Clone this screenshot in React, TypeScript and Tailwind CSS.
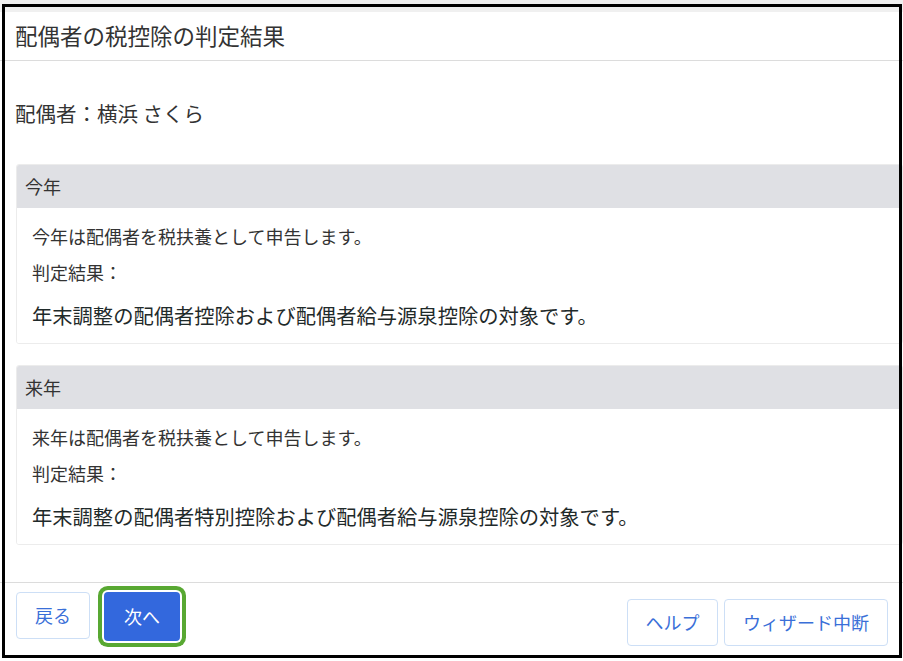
import React from "react";

const font = { fontFamily: '"Noto Sans CJK JP", "Noto Sans", sans-serif' };

function Card({ title, lead, result }: { title: string; lead: string; result: string }) {
  return (
    <div className="ml-[16px] border border-[#ececec] rounded-[3px] overflow-hidden">
      <div className="h-[43px] bg-[#dfe0e4] flex items-center pl-[8px] text-[18px] text-[#333]">{title}</div>
      <div className="bg-white pl-[15px] pt-[15px] pb-[13px] text-[#333]">
        <div className="text-[18px] leading-[26px]">{lead}</div>
        <div className="text-[18px] leading-[26px] mt-[10px]">判定結果：</div>
        <div className="text-[20.3px] leading-[30px] mt-[15px] text-[#1f2a2a]">{result}</div>
      </div>
    </div>
  );
}

export default function App() {
  return (
    <div className="relative w-[903px] h-[661px] bg-white overflow-hidden" style={font}>
      <div className="h-[12px] bg-[#f0f0f0]" />
      <div className="h-[49px] border-b border-[#dcdcdc] flex items-center pl-[15px] text-[22.5px] text-[#333]">
        配偶者の税控除の判定結果
      </div>
      <div className="pt-[37px] pl-[15px] text-[20.5px] leading-[30px] text-[#333]">配偶者：横浜 さくら</div>
      <div className="mt-[36px] flex flex-col gap-[21px]">
        <Card
          title="今年"
          lead="今年は配偶者を税扶養として申告します。"
          result="年末調整の配偶者控除および配偶者給与源泉控除の対象です。"
        />
        <Card
          title="来年"
          lead="来年は配偶者を税扶養として申告します。"
          result="年末調整の配偶者特別控除および配偶者給与源泉控除の対象です。"
        />
      </div>
      <div className="mt-[37px] border-t border-[#dcdcdc] flex pl-[16px] pr-[15px]">
        <div className="flex gap-[14px] pt-[9px]">
          <button className="w-[74px] h-[47px] rounded-[4px] border border-[#cddff6] bg-white text-[18px] text-[#3a6fd8]">
            戻る
          </button>
          <button className="w-[76px] h-[49px] rounded-[4px] bg-[#3368dd] text-[18px] text-white shadow-[0_0_0_2px_#ffffff,0_0_0_6px_#58a832]">
            次へ
          </button>
        </div>
        <div className="ml-auto flex gap-[6px] pt-[16px]">
          <button className="w-[91px] h-[47px] rounded-[4px] border border-[#cddff6] bg-white text-[18px] text-[#3a6fd8]">
            ヘルプ
          </button>
          <button className="w-[164px] h-[47px] rounded-[4px] border border-[#cddff6] bg-white text-[18px] text-[#3a6fd8]">
            ウィザード中断
          </button>
        </div>
      </div>
      <div className="absolute left-[2px] top-[4px] w-[900px] h-[654px] border-[3px] border-black pointer-events-none" />
    </div>
  );
}
